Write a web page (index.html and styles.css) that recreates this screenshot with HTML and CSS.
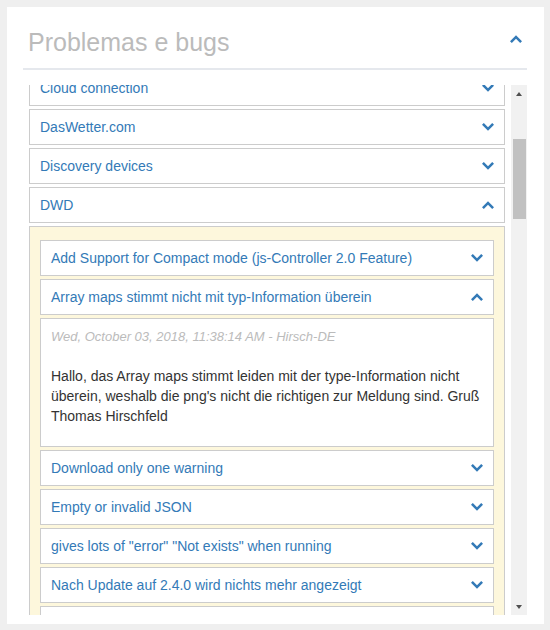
FILE: index.html
```html
<!DOCTYPE html>
<html lang="de">
<head>
<meta charset="utf-8">
<title>Problemas e bugs</title>
<link rel="stylesheet" href="styles.css">
</head>
<body>
<div class="card">
  <div class="card-head">
    <h2 class="title">Problemas e bugs</h2>
    <svg class="chev chev-head" width="12" height="8" viewBox="0 0 12 8"><polygon points="0,6.2 6,0.2 12,6.2 10.2,8 6,3.8 1.8,8"/></svg>
  </div>
  <div class="scroll-wrap">
  <div class="scroll">
    <div class="row"><span>Alexa2</span><svg class="chev" width="12" height="8" viewBox="0 0 12 8"><polygon points="0,1.8 1.8,0 6,4.2 10.2,0 12,1.8 6,7.8"/></svg></div>
    <div class="row"><span>Amazon Dash</span><svg class="chev" width="12" height="8" viewBox="0 0 12 8"><polygon points="0,1.8 1.8,0 6,4.2 10.2,0 12,1.8 6,7.8"/></svg></div>
    <div class="row"><span>Backitup</span><svg class="chev" width="12" height="8" viewBox="0 0 12 8"><polygon points="0,1.8 1.8,0 6,4.2 10.2,0 12,1.8 6,7.8"/></svg></div>
    <div class="row"><span>BMW</span><svg class="chev" width="12" height="8" viewBox="0 0 12 8"><polygon points="0,1.8 1.8,0 6,4.2 10.2,0 12,1.8 6,7.8"/></svg></div>
    <div class="row"><span>Broadlink2</span><svg class="chev" width="12" height="8" viewBox="0 0 12 8"><polygon points="0,1.8 1.8,0 6,4.2 10.2,0 12,1.8 6,7.8"/></svg></div>
    <div class="row"><span>Chromecast</span><svg class="chev" width="12" height="8" viewBox="0 0 12 8"><polygon points="0,1.8 1.8,0 6,4.2 10.2,0 12,1.8 6,7.8"/></svg></div>
    <div class="row"><span>Cloud connection</span><svg class="chev" width="12" height="8" viewBox="0 0 12 8"><polygon points="0,1.8 1.8,0 6,4.2 10.2,0 12,1.8 6,7.8"/></svg></div>
    <div class="row"><span>DasWetter.com</span><svg class="chev" width="12" height="8" viewBox="0 0 12 8"><polygon points="0,1.8 1.8,0 6,4.2 10.2,0 12,1.8 6,7.8"/></svg></div>
    <div class="row"><span>Discovery devices</span><svg class="chev" width="12" height="8" viewBox="0 0 12 8"><polygon points="0,1.8 1.8,0 6,4.2 10.2,0 12,1.8 6,7.8"/></svg></div>
    <div class="row dwd"><span>DWD</span><svg class="chev" width="12" height="8" viewBox="0 0 12 8"><polygon points="0,6.2 6,0.2 12,6.2 10.2,8 6,3.8 1.8,8"/></svg></div>
    <div class="group">
      <div class="row"><span>Add Support for Compact mode (js-Controller 2.0 Feature)</span><svg class="chev" width="12" height="8" viewBox="0 0 12 8"><polygon points="0,1.8 1.8,0 6,4.2 10.2,0 12,1.8 6,7.8"/></svg></div>
      <div class="row"><span>Array maps stimmt nicht mit typ-Information überein</span><svg class="chev" width="12" height="8" viewBox="0 0 12 8"><polygon points="0,6.2 6,0.2 12,6.2 10.2,8 6,3.8 1.8,8"/></svg></div>
      <div class="issue">
        <div class="issue-date">Wed, October 03, 2018, 11:38:14 AM - Hirsch-DE</div>
        <p class="issue-text">Hallo, das Array maps stimmt leiden mit der type-Information nicht überein, weshalb die png's nicht die richtigen zur Meldung sind. Gruß Thomas Hirschfeld</p>
      </div>
      <div class="row"><span>Download only one warning</span><svg class="chev" width="12" height="8" viewBox="0 0 12 8"><polygon points="0,1.8 1.8,0 6,4.2 10.2,0 12,1.8 6,7.8"/></svg></div>
      <div class="row"><span>Empty or invalid JSON</span><svg class="chev" width="12" height="8" viewBox="0 0 12 8"><polygon points="0,1.8 1.8,0 6,4.2 10.2,0 12,1.8 6,7.8"/></svg></div>
      <div class="row"><span>gives lots of "error" "Not exists" when running</span><svg class="chev" width="12" height="8" viewBox="0 0 12 8"><polygon points="0,1.8 1.8,0 6,4.2 10.2,0 12,1.8 6,7.8"/></svg></div>
      <div class="row"><span>Nach Update auf 2.4.0 wird nichts mehr angezeigt</span><svg class="chev" width="12" height="8" viewBox="0 0 12 8"><polygon points="0,1.8 1.8,0 6,4.2 10.2,0 12,1.8 6,7.8"/></svg></div>
      <div class="row"><span>Neue Warnstufen werden nicht angezeigt</span><svg class="chev" width="12" height="8" viewBox="0 0 12 8"><polygon points="0,1.8 1.8,0 6,4.2 10.2,0 12,1.8 6,7.8"/></svg></div>
      <div class="row"><span>Please add region selection by map</span><svg class="chev" width="12" height="8" viewBox="0 0 12 8"><polygon points="0,1.8 1.8,0 6,4.2 10.2,0 12,1.8 6,7.8"/></svg></div>
      <div class="row"><span>Region wird nicht gespeichert</span><svg class="chev" width="12" height="8" viewBox="0 0 12 8"><polygon points="0,1.8 1.8,0 6,4.2 10.2,0 12,1.8 6,7.8"/></svg></div>
    </div>
    <div class="row"><span>Echarts</span><svg class="chev" width="12" height="8" viewBox="0 0 12 8"><polygon points="0,1.8 1.8,0 6,4.2 10.2,0 12,1.8 6,7.8"/></svg></div>
    <div class="row"><span>Email</span><svg class="chev" width="12" height="8" viewBox="0 0 12 8"><polygon points="0,1.8 1.8,0 6,4.2 10.2,0 12,1.8 6,7.8"/></svg></div>
    <div class="row"><span>Enigma2</span><svg class="chev" width="12" height="8" viewBox="0 0 12 8"><polygon points="0,1.8 1.8,0 6,4.2 10.2,0 12,1.8 6,7.8"/></svg></div>
    <div class="row"><span>Feiertage</span><svg class="chev" width="12" height="8" viewBox="0 0 12 8"><polygon points="0,1.8 1.8,0 6,4.2 10.2,0 12,1.8 6,7.8"/></svg></div>
    <div class="row"><span>FHEM</span><svg class="chev" width="12" height="8" viewBox="0 0 12 8"><polygon points="0,1.8 1.8,0 6,4.2 10.2,0 12,1.8 6,7.8"/></svg></div>
    <div class="row"><span>Flot</span><svg class="chev" width="12" height="8" viewBox="0 0 12 8"><polygon points="0,1.8 1.8,0 6,4.2 10.2,0 12,1.8 6,7.8"/></svg></div>
  </div>
  <div class="vbar" aria-hidden="true">
    <div class="vbar-btn"><span class="tri tri-up"></span></div>
    <div class="vbar-track"><div class="vbar-thumb"></div></div>
    <div class="vbar-btn"><span class="tri tri-down"></span></div>
  </div>
  </div>
</div>
<script src="script.js"></script>
</body>
</html>
```

FILE: styles.css
```css
* { box-sizing: border-box; }

html, body {
  margin: 0;
  padding: 0;
  background: #efefef;
}

body {
  font-family: "Liberation Sans", Arial, sans-serif;
  font-size: 14px;
  color: #333;
}

.card {
  width: 537px;
  height: 617px;
  margin: 7px 6px 6px 7px;
  padding: 16px 17px 9px 16px;
  background: #fff;
  display: flex;
  flex-direction: column;
}

.card-head {
  display: flex;
  justify-content: space-between;
  align-items: flex-start;
  padding: 5px 5px 12px 5px;
  border-bottom: 2px solid #e5e8ed;
  flex: none;
}

.title {
  margin: 0;
  font-size: 25px;
  font-weight: normal;
  line-height: 28px;
  color: #bbb;
}

.chev {
  display: block;
  flex: none;
  fill: #337ab7;
}

.chev-head {
  margin-top: 7px;
}

.scroll-wrap {
  display: flex;
  margin-top: 15px;
  height: 530px;
  flex: none;
}

.scroll {
  flex: 1;
  min-width: 0;
  overflow: hidden;
  padding: 6px;
}

.vbar {
  width: 16px;
  flex: none;
  display: flex;
  flex-direction: column;
  background: #f1f1f1;
}

.vbar-btn {
  height: 17px;
  flex: none;
  display: flex;
  align-items: center;
  justify-content: center;
}

.tri {
  display: block;
  width: 0;
  height: 0;
  border-left: 3.5px solid transparent;
  border-right: 3.5px solid transparent;
}

.tri-up {
  border-bottom: 4px solid #505050;
}

.tri-down {
  border-top: 4px solid #505050;
}

.vbar-track {
  flex: 1;
}

.vbar-thumb {
  margin: 37px 1px 0 2px;
  height: 80px;
  background: #c1c1c1;
}

.row {
  display: flex;
  justify-content: space-between;
  align-items: center;
  padding: 7px 10px;
  line-height: 20px;
  color: #337ab7;
  background: #fff;
  border: 1px solid #ccc;
  margin-bottom: 3px;
}

.group {
  background: #fdf7dc;
  border: 1px solid #ccc;
  padding: 13px 10px 10px;
  margin-bottom: 3px;
}

.issue {
  background: #fff;
  border: 1px solid #ccc;
  padding: 8px 10px 20px;
  margin-bottom: 3px;
}

.issue-date {
  font-size: 13px;
  font-style: italic;
  line-height: 20px;
  color: #bbb;
  margin-bottom: 19px;
}

.issue-text {
  margin: 0;
  line-height: 20px;
  color: #333;
}
```

FILE: script.js
```js
var box = document.querySelector('.scroll');
var dwd = document.querySelector('.dwd');
box.scrollTop = dwd.getBoundingClientRect().top - box.getBoundingClientRect().top - 102;
```
